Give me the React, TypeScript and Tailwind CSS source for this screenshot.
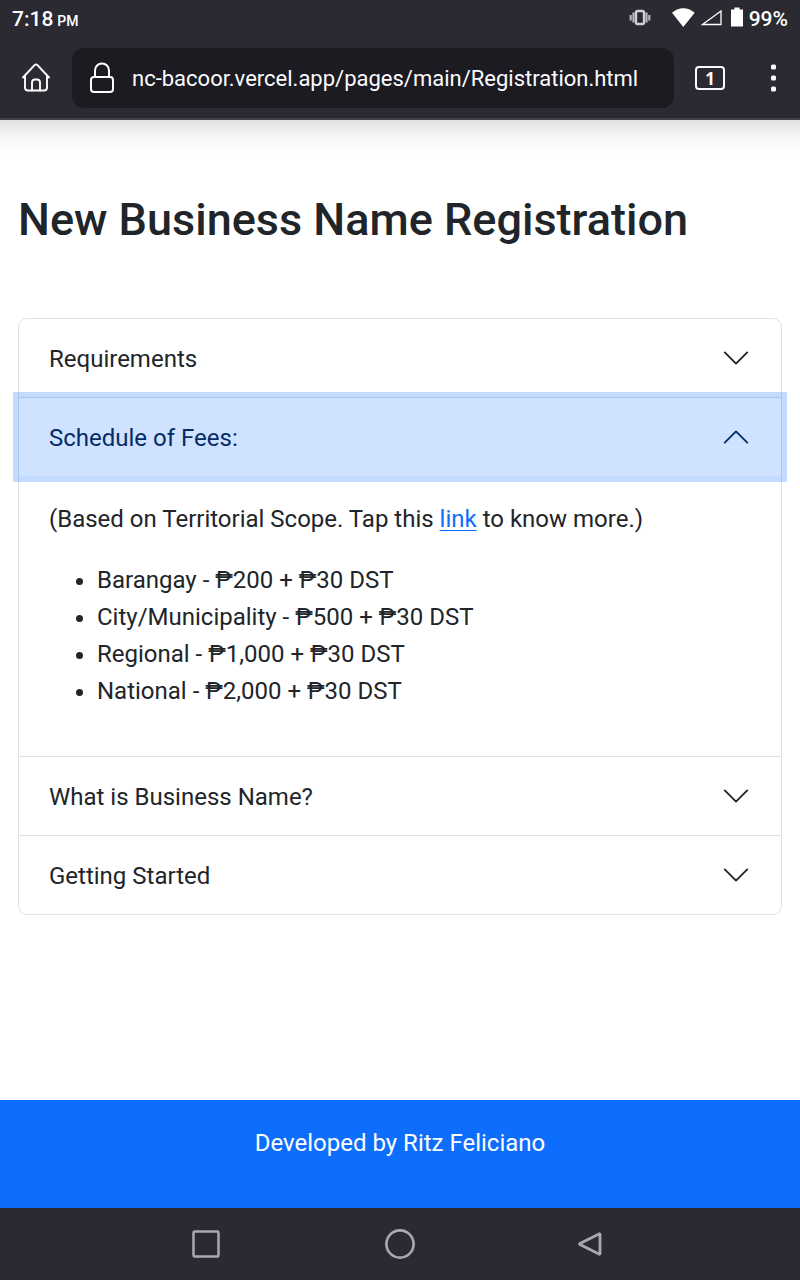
import { useState, type ReactNode } from "react";

function StatusBar() {
  return (
    <div className="flex h-9 items-center justify-between px-3 text-white">
      <p className="flex items-baseline gap-1 text-[21px] font-medium leading-[34px] pt-1">
        <span>7:18</span>
        <span className="text-[14px]">PM</span>
      </p>
      <div className="flex items-center">
        <svg className="mr-5 h-6 w-6" viewBox="0 0 24 24" aria-hidden="true">
          <rect x="9" y="5" width="8" height="13" rx="1.500" fill="none" stroke="#cfced3" strokeWidth="2.400" />
          <path d="M6.500 6.500v10M19.500 6.500v10M3.700 9v5.500M22.300 9v5.500" stroke="#b8b7bc" strokeWidth="2.200" />
        </svg>
        <svg className="mr-1 h-6 w-6" viewBox="0 0 24 24" aria-hidden="true">
          <path d="M1 6.700C4.100 4.100 8 2.200 12.300 2.200s8.300 1.900 11.400 4.500L12.300 21Z" fill="#fff" />
        </svg>
        <svg className="mr-2 h-6 w-6" viewBox="0 0 24 24" aria-hidden="true">
          <path d="M3.500 18.500 22 5v13.500Z" fill="none" stroke="#fff" strokeWidth="1.300" />
        </svg>
        <svg className="mr-1.5 h-6 w-3" viewBox="0 0 12 24" aria-hidden="true">
          <path d="M0 3.500h3.500V1.500h5v2H12v17H0Z" fill="#fff" />
        </svg>
        <span className="pt-0.5 text-[21px] font-medium leading-[34px]">99%</span>
      </div>
    </div>
  );
}

function BrowserBar() {
  return (
    <div className="flex items-center pb-2.5 pt-3 text-[#fbfbfe]">
      <button type="button" aria-label="Home" className="flex h-12 w-[72px] shrink-0 items-center justify-center">
        <svg className="h-8 w-8" viewBox="0 0 32 32" fill="none" stroke="currentColor" strokeWidth="1.900" strokeLinecap="round" strokeLinejoin="round" aria-hidden="true">
          <path d="M3 15.500 14.500 3.200Q16 1.700 17.500 3.200L29 15.500M5 13.500V25.500Q5 28.500 8 28.500H24Q27 28.500 27 25.500V13.500" />
          <path d="M12 28.500V20.500Q12 17.500 15 17.500H17Q20 17.500 20 20.500V28.500" />
        </svg>
      </button>
      <div className="flex h-[60px] min-w-0 flex-1 items-center rounded-xl bg-[#1c1b22] pl-3.5">
        <svg className="h-8 w-8 shrink-0" viewBox="0 0 32 32" fill="none" stroke="currentColor" strokeWidth="2" aria-hidden="true">
          <rect x="5" y="15" width="22" height="15" rx="3" />
          <path d="M9 15V8.500a7 7 0 0 1 14 0V15" />
        </svg>
        <input
          type="text"
          aria-label="Address"
          readOnly
          value="nc-bacoor.vercel.app/pages/main/Registration.html"
          className="ml-3.5 h-full min-w-0 flex-1 bg-transparent text-[22px] outline-none"
        />
      </div>
      <button type="button" aria-label="Tabs" className="flex h-12 w-[72px] shrink-0 items-center justify-center">
        <span className="flex h-6 w-[30px] items-center justify-center rounded-[4px] border-2 border-current font-['Open_Sans',sans-serif] text-[17px] font-bold leading-none">
          1
        </span>
      </button>
      <button type="button" aria-label="Menu" className="flex h-12 w-[54px] shrink-0 items-center justify-center">
        <svg className="h-8 w-8" viewBox="0 0 32 32" fill="currentColor" aria-hidden="true">
          <rect x="14" y="2.500" width="5" height="5" rx="1.500" />
          <rect x="14" y="13.500" width="5" height="5" rx="1.500" />
          <rect x="14" y="24.500" width="5" height="5" rx="1.500" />
        </svg>
      </button>
    </div>
  );
}

type ItemProps = {
  title: string;
  open: boolean;
  onToggle: () => void;
  children?: ReactNode;
};

function AccordionItem({ title, open, onToggle, children }: ItemProps) {
  return (
    <section className="border-b border-[#dee2e6] last:border-b-0">
      <h2>
        <button
          type="button"
          aria-expanded={open}
          onClick={onToggle}
          className={
            open
              ? "relative flex h-[78px] w-full items-center justify-between bg-[#cfe2ff] px-[30px] text-left leading-9 text-[#052c65] ring-[6px] ring-[#0d6efd]/25 outline-none"
              : "flex h-[78px] w-full items-center justify-between px-[30px] text-left leading-9 outline-none"
          }
        >
          <span className="pt-0.5">{title}</span>
          <svg
            className={open ? "h-[30px] w-[30px] rotate-180" : "h-[30px] w-[30px]"}
            viewBox="0 0 16 16"
            fill="none"
            stroke="currentColor"
            strokeLinecap="round"
            strokeLinejoin="round"
            aria-hidden="true"
          >
            <path d="m2 5 6 6 6-6" />
          </svg>
        </button>
      </h2>
      {open && children}
    </section>
  );
}

const fees = [
  "Barangay - ₱200 + ₱30 DST",
  "City/Municipality - ₱500 + ₱30 DST",
  "Regional - ₱1,000 + ₱30 DST",
  "National - ₱2,000 + ₱30 DST",
];

const titles = ["Requirements", "Schedule of Fees:", "What is Business Name?", "Getting Started"];

export default function App() {
  const [active, setActive] = useState(1);

  return (
    <div className="flex min-h-screen flex-col bg-white font-[Roboto,sans-serif] text-[24px] text-[#212529]">
      <header className="border-b-2 border-[#42414d] bg-[#2b2a33]">
        <StatusBar />
        <BrowserBar />
      </header>
      <div className="h-9 bg-linear-to-b from-[#e2e2e2] via-[#f6f6f6] to-white" />

      <main className="flex-1 px-[18px] pb-12">
        <h1 className="pt-[37px] text-[45px] font-medium leading-[54px]">New Business Name Registration</h1>
        <div className="mt-[71px] rounded-[9px] border border-[#dee2e6]">
          {titles.map((title, index) => (
            <AccordionItem
              key={title}
              title={title}
              open={active === index}
              onToggle={() => setActive(active === index ? -1 : index)}
            >
              {index === 1 && (
                <div className="px-[30px] pb-[22px] pt-[25px] leading-[37px]">
                  <p>
                    (Based on Territorial Scope. Tap this{" "}
                    <a href="#scope" className="text-[#0d6efd] underline decoration-1 underline-offset-3">
                      link
                    </a>{" "}
                    to know more.)
                  </p>
                  <ul className="my-6 list-disc pl-12">
                    {fees.map((fee) => (
                      <li key={fee}>{fee}</li>
                    ))}
                  </ul>
                </div>
              )}
            </AccordionItem>
          ))}
        </div>
      </main>

      <footer className="h-[108px] bg-[#0d6efd] pt-[25px] text-center leading-[37px] text-white">
        <p>Developed by Ritz Feliciano</p>
      </footer>

      <nav aria-label="System" className="flex h-[72px] items-center justify-center gap-[162px] bg-[#2b2a33] text-[#aaa9ad]">
        <button type="button" aria-label="Recent apps">
          <svg className="h-8 w-8" viewBox="0 0 32 32" fill="none" stroke="currentColor" strokeWidth="2.500" aria-hidden="true">
            <rect x="3.500" y="3.500" width="25" height="25" rx="1.500" />
          </svg>
        </button>
        <button type="button" aria-label="Home screen">
          <svg className="h-8 w-8" viewBox="0 0 32 32" fill="none" stroke="currentColor" strokeWidth="2.600" aria-hidden="true">
            <circle cx="16" cy="16" r="13.600" />
          </svg>
        </button>
        <button type="button" aria-label="Back">
          <svg className="h-8 w-8" viewBox="0 0 32 32" fill="none" stroke="currentColor" strokeWidth="2.800" strokeLinejoin="bevel" aria-hidden="true">
            <path d="M1 16 22 5.600v20.800Z" />
          </svg>
        </button>
      </nav>
    </div>
  );
}
